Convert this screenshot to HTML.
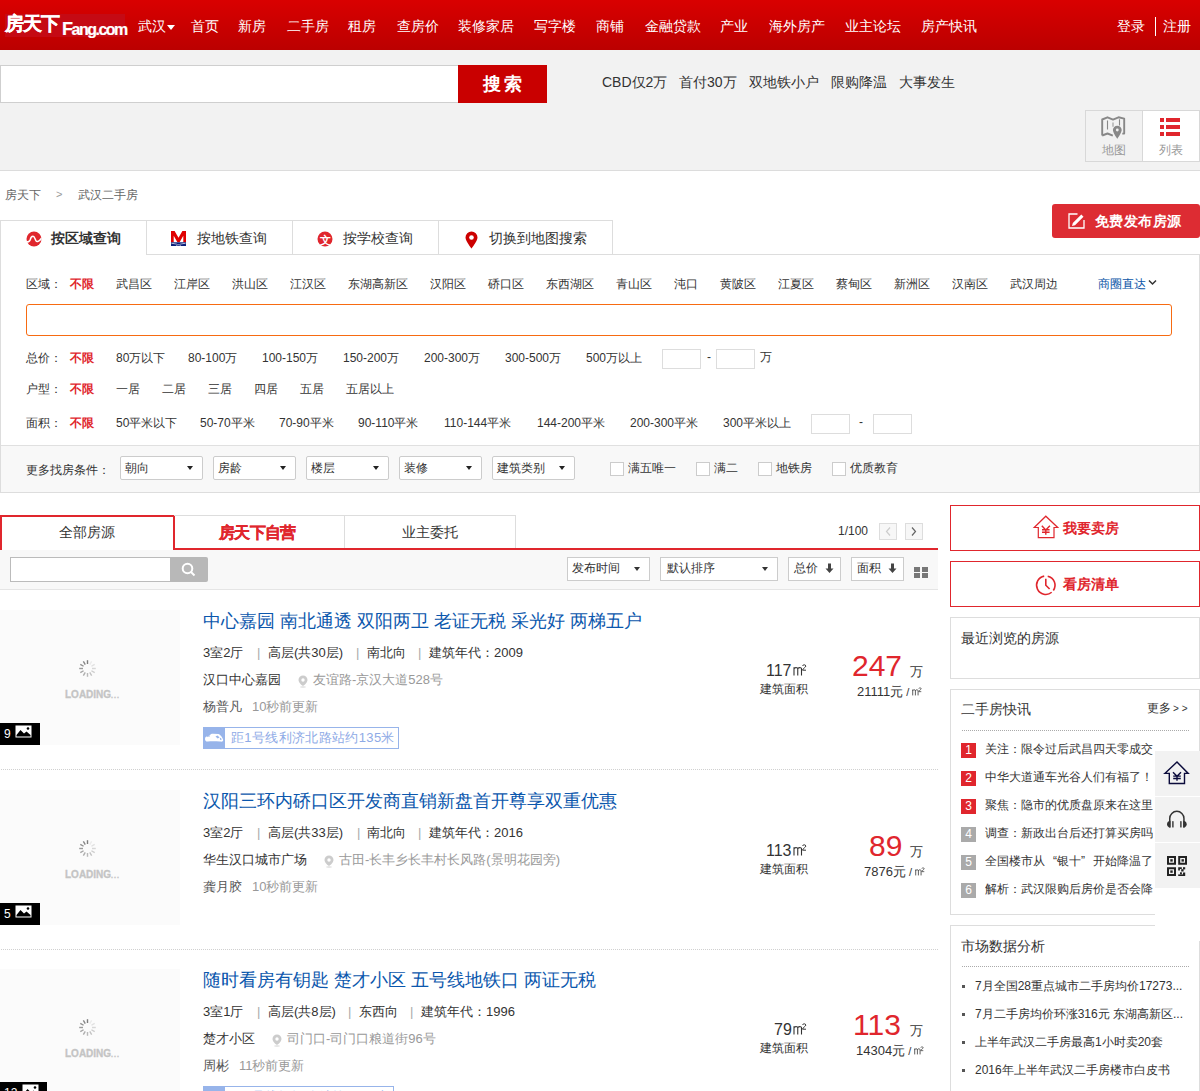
<!DOCTYPE html>
<html><head><meta charset="utf-8"><title>武汉二手房</title><style>
*{margin:0;padding:0;box-sizing:border-box}
html,body{width:1200px;height:1091px;overflow:hidden;background:#fff}
body{font-family:"Liberation Sans",sans-serif;font-size:14px;color:#333;position:relative}
.a{position:absolute;white-space:nowrap}
svg{position:absolute;display:block}
</style></head><body>
<div class="a" style="left:0px;top:0px;width:1200px;height:50px;background:linear-gradient(#d90000,#bb0000)"></div>
<div class="a" style="left:5px;top:14px;width:120px;height:23px;background:#c50a14"></div>
<div class="a" style="left:5px;top:13px;font-size:19px;line-height:23px;color:#fff;font-weight:bold;letter-spacing:-1px;line-height:22px;-webkit-text-stroke:0.3px #fff">房天下</div>
<div class="a" style="left:62px;top:19px;font-size:16px;line-height:20px;color:#fff;font-weight:bold;letter-spacing:-1.5px;line-height:20px;-webkit-text-stroke:0.2px #fff"><span style="font-size:18px">F</span>ang.com</div>
<div class="a" style="left:138px;top:16px;font-size:14px;line-height:18px;color:#fff;line-height:20px">武汉</div>
<div class="a" style="left:191px;top:16px;font-size:14px;line-height:18px;color:#fff;line-height:20px">首页</div>
<div class="a" style="left:238px;top:16px;font-size:14px;line-height:18px;color:#fff;line-height:20px">新房</div>
<div class="a" style="left:287px;top:16px;font-size:14px;line-height:18px;color:#fff;line-height:20px">二手房</div>
<div class="a" style="left:348px;top:16px;font-size:14px;line-height:18px;color:#fff;line-height:20px">租房</div>
<div class="a" style="left:397px;top:16px;font-size:14px;line-height:18px;color:#fff;line-height:20px">查房价</div>
<div class="a" style="left:458px;top:16px;font-size:14px;line-height:18px;color:#fff;line-height:20px">装修家居</div>
<div class="a" style="left:534px;top:16px;font-size:14px;line-height:18px;color:#fff;line-height:20px">写字楼</div>
<div class="a" style="left:596px;top:16px;font-size:14px;line-height:18px;color:#fff;line-height:20px">商铺</div>
<div class="a" style="left:645px;top:16px;font-size:14px;line-height:18px;color:#fff;line-height:20px">金融贷款</div>
<div class="a" style="left:720px;top:16px;font-size:14px;line-height:18px;color:#fff;line-height:20px">产业</div>
<div class="a" style="left:769px;top:16px;font-size:14px;line-height:18px;color:#fff;line-height:20px">海外房产</div>
<div class="a" style="left:845px;top:16px;font-size:14px;line-height:18px;color:#fff;line-height:20px">业主论坛</div>
<div class="a" style="left:921px;top:16px;font-size:14px;line-height:18px;color:#fff;line-height:20px">房产快讯</div>
<div class="a" style="left:1117px;top:16px;font-size:14px;line-height:18px;color:#fff;line-height:20px">登录</div>
<div class="a" style="left:1163px;top:16px;font-size:14px;line-height:18px;color:#fff;line-height:20px">注册</div>
<div class="a" style="left:167px;top:25px;width:0;height:0;border-left:4px solid transparent;border-right:4px solid transparent;border-top:5px solid #fff"></div>
<div class="a" style="left:1155px;top:17px;width:1px;height:19px;background:#fff"></div>
<div class="a" style="left:0px;top:50px;width:1200px;height:121px;background:#f2f2f2;border-bottom:1px solid #dcdcdc"></div>
<div class="a" style="left:0px;top:65px;width:459px;height:38px;background:#fff;border:1px solid #cfcfcf"></div>
<div class="a" style="left:458px;top:65px;width:89px;height:38px;background:#c90000;color:#fff;font-weight:bold;font-size:18px;line-height:38px;text-align:center;letter-spacing:3px;text-indent:3px">搜索</div>
<div class="a" style="left:602px;top:73px;font-size:14px;line-height:18px;color:#333;">CBD仅2万</div>
<div class="a" style="left:679px;top:73px;font-size:14px;line-height:18px;color:#333;">首付30万</div>
<div class="a" style="left:749px;top:73px;font-size:14px;line-height:18px;color:#333;">双地铁小户</div>
<div class="a" style="left:831px;top:73px;font-size:14px;line-height:18px;color:#333;">限购降温</div>
<div class="a" style="left:899px;top:73px;font-size:14px;line-height:18px;color:#333;">大事发生</div>
<div class="a" style="left:1085px;top:110px;width:115px;height:52px;border:1px solid #d8d8d8;background:#f2f2f2"></div>
<div class="a" style="left:1142px;top:111px;width:57px;height:50px;background:#fff;border-left:1px solid #d8d8d8"></div>
<svg style="left:1100px;top:115px" width="26" height="26" viewBox="0 0 26 26">
<path d="M2.2 20.5 V4.5 L7.5 2.3 L13 4.6 L18.5 2.3 L24.2 3.6 V18.6 H22.3" fill="none" stroke="#888" stroke-width="1.9" stroke-linejoin="round"/>
<path d="M2.2 20.5 L7.5 18.5 L12.8 20.6" fill="none" stroke="#888" stroke-width="1.9" stroke-linejoin="round"/>
<path d="M7.5 5.5 V14.5 M19.5 4.3 V10.5" stroke="#888" stroke-width="1.1"/>
<path d="M13 7.5 V11.8" stroke="#999" stroke-width="1.1"/>
<path d="M17.3 10.7 a4.4 4.4 0 0 1 4.4 4.4 c0 2.5 -4.4 8.9 -4.4 8.9 c0 0 -4.4 -6.4 -4.4 -8.9 a4.4 4.4 0 0 1 4.4 -4.4z" fill="#888"/>
<circle cx="17.3" cy="15" r="1.4" fill="#f2f2f2"/>
</svg>
<div class="a" style="left:1102px;top:142px;font-size:12px;line-height:16px;color:#999;">地图</div>
<div class="a" style="left:1160px;top:118px;width:4px;height:3.5px;background:#e0262d"></div>
<div class="a" style="left:1166px;top:118px;width:14px;height:3.5px;background:#e0262d"></div>
<div class="a" style="left:1160px;top:125px;width:4px;height:3.5px;background:#e0262d"></div>
<div class="a" style="left:1166px;top:125px;width:14px;height:3.5px;background:#e0262d"></div>
<div class="a" style="left:1160px;top:132px;width:4px;height:3.5px;background:#e0262d"></div>
<div class="a" style="left:1166px;top:132px;width:14px;height:3.5px;background:#e0262d"></div>
<div class="a" style="left:1159px;top:142px;font-size:12px;line-height:16px;color:#999;">列表</div>
<div class="a" style="left:5px;top:187px;font-size:12px;line-height:16px;color:#666;">房天下</div>
<div class="a" style="left:56px;top:187px;font-size:11px;line-height:15px;color:#999;">&gt;</div>
<div class="a" style="left:78px;top:187px;font-size:12px;line-height:16px;color:#666;">武汉二手房</div>
<div class="a" style="left:1052px;top:204px;width:148px;height:34px;background:#dd2c33;border-radius:3px"></div>
<svg style="left:1068px;top:213px" width="18" height="17" viewBox="0 0 18 17"><path d="M9.5 1 H1 V15 H16 V7" fill="none" stroke="#fff" stroke-width="1.3"/><path d="M4 13 L4.8 10 L13.3 1.5 L15.5 3.7 L7 12.2 Z" fill="#fff"/></svg>
<div class="a" style="left:1095px;top:212px;font-size:14px;line-height:18px;color:#fff;font-weight:bold;letter-spacing:0.4px">免费发布房源</div>
<div class="a" style="left:0px;top:220px;width:613px;height:35px;border:1px solid #ddd;border-bottom:none"></div>
<div class="a" style="left:147px;top:254px;width:1053px;height:1px;background:#ddd"></div>
<div class="a" style="left:146px;top:220px;width:1px;height:35px;background:#ddd"></div>
<div class="a" style="left:292px;top:220px;width:1px;height:35px;background:#ddd"></div>
<div class="a" style="left:438px;top:220px;width:1px;height:35px;background:#ddd"></div>
<svg style="left:26px;top:231px" width="16" height="16" viewBox="0 0 16 16">
<circle cx="8" cy="8" r="7.5" fill="#e0262d"/>
<path d="M0.5 11 C2.5 11 3.8 10.5 4.3 8.5 C4.8 6 5.8 5.2 7 5.2 C8.5 5.2 9 8 9.8 9.5 C10.5 11 12.5 11.5 15.5 7.3" fill="none" stroke="#fff" stroke-width="1.5"/>
</svg>
<div class="a" style="left:51px;top:229px;font-size:14px;line-height:18px;color:#333;font-weight:bold;">按区域查询</div>
<svg style="left:171px;top:231px" width="16" height="16" viewBox="0 0 16 16"><path d="M0 11.3 V0 H3.6 L7.5 6.8 L11.4 0 H15 V11.3 H12.3 V4.8 L8.6 11.3 H6.4 L2.7 4.8 V11.3 Z" fill="#e00000"/><rect x="0" y="11.3" width="15" height="3.7" fill="#0a1f7a"/><path d="M0.5 12.6 C2.5 12 4 13.3 5.5 12.8 M9.5 12.8 C11 13.3 12.5 12 14.5 12.6 M5 14.3 C6.5 13.6 8.5 13.6 10 14.3" fill="none" stroke="#fff" stroke-width="0.7"/></svg>
<div class="a" style="left:197px;top:229px;font-size:14px;line-height:18px;color:#333;">按地铁查询</div>
<svg style="left:317px;top:231px" width="16" height="16" viewBox="0 0 16 16">
<circle cx="8" cy="8" r="7.5" fill="#e0262d"/>
<text x="8" y="12.5" font-size="11" text-anchor="middle" fill="#fff" font-weight="bold">文</text>
</svg>
<div class="a" style="left:343px;top:229px;font-size:14px;line-height:18px;color:#333;">按学校查询</div>
<svg style="left:465px;top:231px" width="13" height="18" viewBox="0 0 13 18">
<path d="M6.5 0.5 A6 6 0 0 1 12.5 6.5 C12.5 10 6.5 17.5 6.5 17.5 C6.5 17.5 0.5 10 0.5 6.5 A6 6 0 0 1 6.5 0.5Z" fill="#c00"/>
<circle cx="6.5" cy="6.5" r="2.3" fill="#fff"/>
</svg>
<div class="a" style="left:489px;top:229px;font-size:14px;line-height:18px;color:#333;">切换到地图搜索</div>
<div class="a" style="left:0px;top:254px;width:1200px;height:239px;border:1px solid #ddd;border-top:none"></div>
<div class="a" style="left:1px;top:445px;width:1198px;height:47px;background:#f8f8f8;border-top:1px solid #e0e0e0"></div>
<div class="a" style="left:26px;top:276px;font-size:12px;line-height:16px;color:#333;">区域：</div>
<div class="a" style="left:70px;top:276px;font-size:12px;line-height:16px;color:#e0262d;font-weight:bold;">不限</div>
<div class="a" style="left:116px;top:276px;font-size:12px;line-height:16px;color:#333;">武昌区</div>
<div class="a" style="left:174px;top:276px;font-size:12px;line-height:16px;color:#333;">江岸区</div>
<div class="a" style="left:232px;top:276px;font-size:12px;line-height:16px;color:#333;">洪山区</div>
<div class="a" style="left:290px;top:276px;font-size:12px;line-height:16px;color:#333;">江汉区</div>
<div class="a" style="left:348px;top:276px;font-size:12px;line-height:16px;color:#333;">东湖高新区</div>
<div class="a" style="left:430px;top:276px;font-size:12px;line-height:16px;color:#333;">汉阳区</div>
<div class="a" style="left:488px;top:276px;font-size:12px;line-height:16px;color:#333;">硚口区</div>
<div class="a" style="left:546px;top:276px;font-size:12px;line-height:16px;color:#333;">东西湖区</div>
<div class="a" style="left:616px;top:276px;font-size:12px;line-height:16px;color:#333;">青山区</div>
<div class="a" style="left:674px;top:276px;font-size:12px;line-height:16px;color:#333;">沌口</div>
<div class="a" style="left:720px;top:276px;font-size:12px;line-height:16px;color:#333;">黄陂区</div>
<div class="a" style="left:778px;top:276px;font-size:12px;line-height:16px;color:#333;">江夏区</div>
<div class="a" style="left:836px;top:276px;font-size:12px;line-height:16px;color:#333;">蔡甸区</div>
<div class="a" style="left:894px;top:276px;font-size:12px;line-height:16px;color:#333;">新洲区</div>
<div class="a" style="left:952px;top:276px;font-size:12px;line-height:16px;color:#333;">汉南区</div>
<div class="a" style="left:1010px;top:276px;font-size:12px;line-height:16px;color:#333;">武汉周边</div>
<div class="a" style="left:1098px;top:276px;font-size:12px;line-height:16px;color:#0b56a8;">商圈直达</div>
<svg style="left:1148px;top:279px" width="9" height="7" viewBox="0 0 9 7"><path d="M1 1.5 L4.5 5 L8 1.5" fill="none" stroke="#333" stroke-width="1.5"/></svg>
<div class="a" style="left:26px;top:304px;width:1146px;height:32px;border:1px solid #f76b12;border-radius:3px"></div>
<div class="a" style="left:26px;top:350px;font-size:12px;line-height:16px;color:#333;">总价：</div>
<div class="a" style="left:70px;top:350px;font-size:12px;line-height:16px;color:#e0262d;font-weight:bold;">不限</div>
<div class="a" style="left:116px;top:350px;font-size:12px;line-height:16px;color:#333;">80万以下</div>
<div class="a" style="left:188px;top:350px;font-size:12px;line-height:16px;color:#333;">80-100万</div>
<div class="a" style="left:262px;top:350px;font-size:12px;line-height:16px;color:#333;">100-150万</div>
<div class="a" style="left:343px;top:350px;font-size:12px;line-height:16px;color:#333;">150-200万</div>
<div class="a" style="left:424px;top:350px;font-size:12px;line-height:16px;color:#333;">200-300万</div>
<div class="a" style="left:505px;top:350px;font-size:12px;line-height:16px;color:#333;">300-500万</div>
<div class="a" style="left:586px;top:350px;font-size:12px;line-height:16px;color:#333;">500万以上</div>
<div class="a" style="left:662px;top:349px;width:39px;height:20px;border:1px solid #ddd;background:#fff"></div>
<div class="a" style="left:707px;top:349px;font-size:12px;line-height:16px;color:#333;">-</div>
<div class="a" style="left:716px;top:349px;width:39px;height:20px;border:1px solid #ddd;background:#fff"></div>
<div class="a" style="left:760px;top:349px;font-size:12px;line-height:16px;color:#333;">万</div>
<div class="a" style="left:26px;top:381px;font-size:12px;line-height:16px;color:#333;">户型：</div>
<div class="a" style="left:70px;top:381px;font-size:12px;line-height:16px;color:#e0262d;font-weight:bold;">不限</div>
<div class="a" style="left:116px;top:381px;font-size:12px;line-height:16px;color:#333;">一居</div>
<div class="a" style="left:162px;top:381px;font-size:12px;line-height:16px;color:#333;">二居</div>
<div class="a" style="left:208px;top:381px;font-size:12px;line-height:16px;color:#333;">三居</div>
<div class="a" style="left:254px;top:381px;font-size:12px;line-height:16px;color:#333;">四居</div>
<div class="a" style="left:300px;top:381px;font-size:12px;line-height:16px;color:#333;">五居</div>
<div class="a" style="left:346px;top:381px;font-size:12px;line-height:16px;color:#333;">五居以上</div>
<div class="a" style="left:26px;top:415px;font-size:12px;line-height:16px;color:#333;">面积：</div>
<div class="a" style="left:70px;top:415px;font-size:12px;line-height:16px;color:#e0262d;font-weight:bold;">不限</div>
<div class="a" style="left:116px;top:415px;font-size:12px;line-height:16px;color:#333;">50平米以下</div>
<div class="a" style="left:200px;top:415px;font-size:12px;line-height:16px;color:#333;">50-70平米</div>
<div class="a" style="left:279px;top:415px;font-size:12px;line-height:16px;color:#333;">70-90平米</div>
<div class="a" style="left:358px;top:415px;font-size:12px;line-height:16px;color:#333;">90-110平米</div>
<div class="a" style="left:444px;top:415px;font-size:12px;line-height:16px;color:#333;">110-144平米</div>
<div class="a" style="left:537px;top:415px;font-size:12px;line-height:16px;color:#333;">144-200平米</div>
<div class="a" style="left:630px;top:415px;font-size:12px;line-height:16px;color:#333;">200-300平米</div>
<div class="a" style="left:723px;top:415px;font-size:12px;line-height:16px;color:#333;">300平米以上</div>
<div class="a" style="left:811px;top:414px;width:39px;height:20px;border:1px solid #ddd;background:#fff"></div>
<div class="a" style="left:859px;top:414px;font-size:12px;line-height:16px;color:#333;">-</div>
<div class="a" style="left:873px;top:414px;width:39px;height:20px;border:1px solid #ddd;background:#fff"></div>
<div class="a" style="left:26px;top:462px;font-size:12px;line-height:16px;color:#333;">更多找房条件：</div>
<div class="a" style="left:120px;top:456px;width:83px;height:24px;border:1px solid #ccc;background:#fff;border-radius:2px"></div>
<div class="a" style="left:125px;top:460px;font-size:12px;line-height:16px;color:#333;">朝向</div>
<div class="a" style="left:186.5px;top:466px;width:0;height:0;border-left:3.5px solid transparent;border-right:3.5px solid transparent;border-top:4.5px solid #222"></div>
<div class="a" style="left:213px;top:456px;width:83px;height:24px;border:1px solid #ccc;background:#fff;border-radius:2px"></div>
<div class="a" style="left:218px;top:460px;font-size:12px;line-height:16px;color:#333;">房龄</div>
<div class="a" style="left:279.5px;top:466px;width:0;height:0;border-left:3.5px solid transparent;border-right:3.5px solid transparent;border-top:4.5px solid #222"></div>
<div class="a" style="left:306px;top:456px;width:83px;height:24px;border:1px solid #ccc;background:#fff;border-radius:2px"></div>
<div class="a" style="left:311px;top:460px;font-size:12px;line-height:16px;color:#333;">楼层</div>
<div class="a" style="left:372.5px;top:466px;width:0;height:0;border-left:3.5px solid transparent;border-right:3.5px solid transparent;border-top:4.5px solid #222"></div>
<div class="a" style="left:399px;top:456px;width:83px;height:24px;border:1px solid #ccc;background:#fff;border-radius:2px"></div>
<div class="a" style="left:404px;top:460px;font-size:12px;line-height:16px;color:#333;">装修</div>
<div class="a" style="left:465.5px;top:466px;width:0;height:0;border-left:3.5px solid transparent;border-right:3.5px solid transparent;border-top:4.5px solid #222"></div>
<div class="a" style="left:492px;top:456px;width:83px;height:24px;border:1px solid #ccc;background:#fff;border-radius:2px"></div>
<div class="a" style="left:497px;top:460px;font-size:12px;line-height:16px;color:#333;">建筑类别</div>
<div class="a" style="left:558.5px;top:466px;width:0;height:0;border-left:3.5px solid transparent;border-right:3.5px solid transparent;border-top:4.5px solid #222"></div>
<div class="a" style="left:610px;top:462px;width:14px;height:14px;border:1px solid #ccc;background:#fff"></div>
<div class="a" style="left:628px;top:460px;font-size:12px;line-height:16px;color:#333;">满五唯一</div>
<div class="a" style="left:696px;top:462px;width:14px;height:14px;border:1px solid #ccc;background:#fff"></div>
<div class="a" style="left:714px;top:460px;font-size:12px;line-height:16px;color:#333;">满二</div>
<div class="a" style="left:758px;top:462px;width:14px;height:14px;border:1px solid #ccc;background:#fff"></div>
<div class="a" style="left:776px;top:460px;font-size:12px;line-height:16px;color:#333;">地铁房</div>
<div class="a" style="left:832px;top:462px;width:14px;height:14px;border:1px solid #ccc;background:#fff"></div>
<div class="a" style="left:850px;top:460px;font-size:12px;line-height:16px;color:#333;">优质教育</div>
<div class="a" style="left:0px;top:515px;width:175px;height:35px;border:2px solid #e0262d;border-bottom:none;background:#fff"></div>
<div class="a" style="left:174px;top:548px;width:764px;height:2px;background:#e0262d"></div>
<div class="a" style="left:174px;top:515px;width:342px;height:33px;border:1px solid #ddd;border-left:none;border-bottom:none"></div>
<div class="a" style="left:344px;top:515px;width:1px;height:33px;background:#ddd"></div>
<div class="a" style="left:59px;top:523px;font-size:14px;line-height:18px;color:#333;">全部房源</div>
<div class="a" style="left:219px;top:523px;font-size:16px;line-height:20px;color:#e0262d;font-weight:bold;letter-spacing:-0.7px;-webkit-text-stroke:0.3px #e0262d">房天下自营</div>
<div class="a" style="left:402px;top:523px;font-size:14px;line-height:18px;color:#333;">业主委托</div>
<div class="a" style="left:838px;top:523px;font-size:12px;line-height:16px;color:#333;">1/100</div>
<div class="a" style="left:879px;top:523px;width:18px;height:17px;border:1px solid #ddd;background:#f7f7f7"></div>
<div class="a" style="left:905px;top:523px;width:18px;height:17px;border:1px solid #ddd;background:#f7f7f7"></div>
<svg style="left:879px;top:523px" width="44" height="17" viewBox="0 0 44 17"><path d="M11 4.5 L7.5 8.5 L11 12.5" fill="none" stroke="#ccc" stroke-width="1.2"/><path d="M33 4.5 L36.5 8.5 L33 12.5" fill="none" stroke="#666" stroke-width="1.2"/></svg>
<div class="a" style="left:0px;top:550px;width:938px;height:40px;background:#f8f8f8;border-bottom:1px solid #e5e5e5"></div>
<div class="a" style="left:10px;top:557px;width:161px;height:25px;border:1px solid #bbb;background:#fff"></div>
<div class="a" style="left:170px;top:557px;width:38px;height:25px;background:#b8b8b8;border-radius:0 2px 2px 0"></div>
<svg style="left:181px;top:562px" width="15" height="15" viewBox="0 0 15 15"><circle cx="6.5" cy="6.5" r="4.8" fill="none" stroke="#fff" stroke-width="2"/><path d="M10 10 L13.5 13.5" stroke="#fff" stroke-width="2"/></svg>
<div class="a" style="left:567px;top:557px;width:83px;height:24px;border:1px solid #ccc;background:#fff"></div>
<div class="a" style="left:572px;top:560px;font-size:12px;line-height:16px;color:#333;">发布时间</div>
<div class="a" style="left:634px;top:567px;width:0;height:0;border-left:3.5px solid transparent;border-right:3.5px solid transparent;border-top:4px solid #333"></div>
<div class="a" style="left:660px;top:557px;width:118px;height:24px;border:1px solid #ccc;background:#fff"></div>
<div class="a" style="left:667px;top:560px;font-size:12px;line-height:16px;color:#333;">默认排序</div>
<div class="a" style="left:762px;top:567px;width:0;height:0;border-left:3.5px solid transparent;border-right:3.5px solid transparent;border-top:4px solid #333"></div>
<div class="a" style="left:788px;top:557px;width:53px;height:24px;border:1px solid #ccc;background:#fff"></div>
<div class="a" style="left:794px;top:560px;font-size:12px;line-height:16px;color:#333;">总价</div>
<svg style="left:825px;top:563px" width="9" height="11" viewBox="0 0 9 11"><path d="M3 0.5 H6 V5.5 H8.5 L4.5 10 L0.5 5.5 H3Z" fill="#444"/></svg>
<div class="a" style="left:851px;top:557px;width:53px;height:24px;border:1px solid #ccc;background:#fff"></div>
<div class="a" style="left:857px;top:560px;font-size:12px;line-height:16px;color:#333;">面积</div>
<svg style="left:888px;top:563px" width="9" height="11" viewBox="0 0 9 11"><path d="M3 0.5 H6 V5.5 H8.5 L4.5 10 L0.5 5.5 H3Z" fill="#444"/></svg>
<div class="a" style="left:914px;top:567px;width:6px;height:5px;background:#777"></div>
<div class="a" style="left:922px;top:567px;width:6px;height:5px;background:#777"></div>
<div class="a" style="left:914px;top:573px;width:6px;height:5px;background:#777"></div>
<div class="a" style="left:922px;top:573px;width:6px;height:5px;background:#777"></div>
<div class="a" style="left:0px;top:610px;width:180px;height:135px;background:#fbfbfb"></div>
<svg style="left:78px;top:659px" width="19" height="19" viewBox="0 0 19 19"><line x1="9.5" y1="1.2" x2="9.5" y2="5" stroke="rgb(125,125,125)" stroke-width="1.4" transform="rotate(0 9.5 9.5)"/><line x1="9.5" y1="1.2" x2="9.5" y2="5" stroke="rgb(135,135,135)" stroke-width="1.4" transform="rotate(-30 9.5 9.5)"/><line x1="9.5" y1="1.2" x2="9.5" y2="5" stroke="rgb(145,145,145)" stroke-width="1.4" transform="rotate(-60 9.5 9.5)"/><line x1="9.5" y1="1.2" x2="9.5" y2="5" stroke="rgb(155,155,155)" stroke-width="1.4" transform="rotate(-90 9.5 9.5)"/><line x1="9.5" y1="1.2" x2="9.5" y2="5" stroke="rgb(165,165,165)" stroke-width="1.4" transform="rotate(-120 9.5 9.5)"/><line x1="9.5" y1="1.2" x2="9.5" y2="5" stroke="rgb(175,175,175)" stroke-width="1.4" transform="rotate(-150 9.5 9.5)"/><line x1="9.5" y1="1.2" x2="9.5" y2="5" stroke="rgb(185,185,185)" stroke-width="1.4" transform="rotate(-180 9.5 9.5)"/><line x1="9.5" y1="1.2" x2="9.5" y2="5" stroke="rgb(195,195,195)" stroke-width="1.4" transform="rotate(-210 9.5 9.5)"/><line x1="9.5" y1="1.2" x2="9.5" y2="5" stroke="rgb(205,205,205)" stroke-width="1.4" transform="rotate(-240 9.5 9.5)"/><line x1="9.5" y1="1.2" x2="9.5" y2="5" stroke="rgb(215,215,215)" stroke-width="1.4" transform="rotate(-270 9.5 9.5)"/><line x1="9.5" y1="1.2" x2="9.5" y2="5" stroke="rgb(225,225,225)" stroke-width="1.4" transform="rotate(-300 9.5 9.5)"/><line x1="9.5" y1="1.2" x2="9.5" y2="5" stroke="rgb(235,235,235)" stroke-width="1.4" transform="rotate(-330 9.5 9.5)"/></svg>
<div class="a" style="left:65px;top:689px;font-size:10px;line-height:14px;color:#c4c4c4;font-weight:bold;line-height:12px;-webkit-text-stroke:0.3px #c4c4c4">LOADING<span style="font-size:7px;letter-spacing:1px">...</span></div>
<div class="a" style="left:0px;top:723px;width:40px;height:22px;background:#000"></div>
<div class="a" style="left:4px;top:726px;font-size:12px;line-height:16px;color:#fff;line-height:16px">9</div>
<svg style="left:15px;top:725px" width="17" height="13" viewBox="0 0 17 13"><rect x="0.5" y="0.5" width="16" height="12" fill="#fff"/><path d="M1.5 10 L5.5 5 L9 8.5 L11.5 6.5 L15.5 10 V11.5 H1.5Z" fill="#000"/><circle cx="13" cy="3.5" r="1.3" fill="#000"/></svg>
<div class="a" style="left:203px;top:609px;font-size:18px;line-height:22px;color:#0b57ad;line-height:24px">中心嘉园 南北通透 双阳两卫 老证无税 采光好 两梯五户</div>
<div class="a" style="left:203px;top:644px;font-size:13px;line-height:17px;color:#333;">3室2厅</div>
<div class="a" style="left:257px;top:644px;font-size:13px;line-height:17px;color:#aaa;">|</div>
<div class="a" style="left:268px;top:644px;font-size:13px;line-height:17px;color:#333;">高层(共30层)</div>
<div class="a" style="left:356px;top:644px;font-size:13px;line-height:17px;color:#aaa;">|</div>
<div class="a" style="left:367px;top:644px;font-size:13px;line-height:17px;color:#333;">南北向</div>
<div class="a" style="left:418px;top:644px;font-size:13px;line-height:17px;color:#aaa;">|</div>
<div class="a" style="left:429px;top:644px;font-size:13px;line-height:17px;color:#333;">建筑年代：2009</div>
<div class="a" style="left:203px;top:671px;font-size:13px;line-height:17px;color:#333;">汉口中心嘉园</div>
<svg style="left:298px;top:675px" width="10" height="13" viewBox="0 0 10 13"><path d="M5 0.5 A4.5 4.5 0 0 1 9.5 5 C9.5 8 5 11 5 11 C5 11 0.5 8 0.5 5 A4.5 4.5 0 0 1 5 0.5Z" fill="#ccc"/><circle cx="5" cy="5" r="1.7" fill="#fff"/><ellipse cx="5" cy="12" rx="3" ry="0.8" fill="#ddd"/></svg>
<div class="a" style="left:313px;top:671px;font-size:13px;line-height:17px;color:#999;">友谊路-京汉大道528号</div>
<div class="a" style="left:203px;top:698px;font-size:13px;line-height:17px;color:#555;">杨普凡</div>
<div class="a" style="left:252px;top:698px;font-size:13px;line-height:17px;color:#999;">10秒前更新</div>
<div class="a" style="left:203px;top:727px;width:196px;height:22px;border:1px solid #97b4ea;background:#fff"></div>
<div class="a" style="left:203px;top:727px;width:22px;height:22px;background:#97b4ea"></div>
<svg style="left:203px;top:727px" width="22" height="22" viewBox="0 0 22 22"><path d="M2 12 C2 10.2 3 9.6 4.5 9.6 L7 8.2 C7.5 7.2 8.5 6.8 10 6.8 L15.5 7 C17 7.3 20 11 20.2 13 C20.2 14.5 19 15 17 14.6 C13 14.2 8 14.1 5 14.5 C3 14.8 2 13.8 2 12 Z" fill="#fff"/><path d="M12.5 9.6 L14.5 8.6 L16.6 10.6 L14.6 11.6 Z M16.8 11.6 L17.8 10.8 L18.8 12.6 L17.3 12.9Z" fill="#97b4ea"/><path d="M4 9.6 L7 9.2" stroke="#97b4ea" stroke-width="0.6"/></svg>
<div class="a" style="left:231px;top:729px;font-size:13px;line-height:17px;color:#8eaae6;letter-spacing:0.35px">距1号线利济北路站约135米</div>
<div class="a" style="left:766px;top:661px;font-size:16px;line-height:20px;color:#333;line-height:20px">117<svg style="position:relative;display:inline-block;vertical-align:0;margin-left:1px" width="14" height="12" viewBox="0 0 14 12"><path d="M1 3.2 V11.5 M1 4.8 C1.3 3.3 4.75 3.1 4.75 4.8 V11.5 M4.75 4.8 C5.05 3.3 8.5 3.1 8.5 4.8 V11.5" fill="none" stroke="#333" stroke-width="1.1"/><path d="M9.6 1.9 C9.8 0.4 12.8 0.4 12.8 2.1 C12.8 3.4 10 4.2 9.5 6.2 H13" fill="none" stroke="#333" stroke-width="1"/></svg></div>
<div class="a" style="left:760px;top:681px;font-size:12px;line-height:16px;color:#333;">建筑面积</div>
<div class="a" style="left:852px;top:649px;font-size:30px;line-height:34px;color:#e0262d;line-height:34px">247</div>
<div class="a" style="left:910px;top:663px;font-size:13px;line-height:17px;color:#333;">万</div>
<div class="a" style="left:857px;top:683px;font-size:13px;line-height:17px;color:#333;">21111元<span style="font-size:11px;margin:0 2px 0 3px">/</span><svg style="position:relative;display:inline-block;vertical-align:0;margin-left:1px" width="10" height="9" viewBox="0 0 14 12"><path d="M1 3.2 V11.5 M1 4.8 C1.3 3.3 4.75 3.1 4.75 4.8 V11.5 M4.75 4.8 C5.05 3.3 8.5 3.1 8.5 4.8 V11.5" fill="none" stroke="#333" stroke-width="1.1"/><path d="M9.6 1.9 C9.8 0.4 12.8 0.4 12.8 2.1 C12.8 3.4 10 4.2 9.5 6.2 H13" fill="none" stroke="#333" stroke-width="1"/></svg></div>
<div class="a" style="left:1px;top:769px;width:937px;height:1px;background:repeating-linear-gradient(90deg,#d0d0d0 0 1px,transparent 1px 2px)"></div>
<div class="a" style="left:0px;top:790px;width:180px;height:135px;background:#fbfbfb"></div>
<svg style="left:78px;top:839px" width="19" height="19" viewBox="0 0 19 19"><line x1="9.5" y1="1.2" x2="9.5" y2="5" stroke="rgb(125,125,125)" stroke-width="1.4" transform="rotate(0 9.5 9.5)"/><line x1="9.5" y1="1.2" x2="9.5" y2="5" stroke="rgb(135,135,135)" stroke-width="1.4" transform="rotate(-30 9.5 9.5)"/><line x1="9.5" y1="1.2" x2="9.5" y2="5" stroke="rgb(145,145,145)" stroke-width="1.4" transform="rotate(-60 9.5 9.5)"/><line x1="9.5" y1="1.2" x2="9.5" y2="5" stroke="rgb(155,155,155)" stroke-width="1.4" transform="rotate(-90 9.5 9.5)"/><line x1="9.5" y1="1.2" x2="9.5" y2="5" stroke="rgb(165,165,165)" stroke-width="1.4" transform="rotate(-120 9.5 9.5)"/><line x1="9.5" y1="1.2" x2="9.5" y2="5" stroke="rgb(175,175,175)" stroke-width="1.4" transform="rotate(-150 9.5 9.5)"/><line x1="9.5" y1="1.2" x2="9.5" y2="5" stroke="rgb(185,185,185)" stroke-width="1.4" transform="rotate(-180 9.5 9.5)"/><line x1="9.5" y1="1.2" x2="9.5" y2="5" stroke="rgb(195,195,195)" stroke-width="1.4" transform="rotate(-210 9.5 9.5)"/><line x1="9.5" y1="1.2" x2="9.5" y2="5" stroke="rgb(205,205,205)" stroke-width="1.4" transform="rotate(-240 9.5 9.5)"/><line x1="9.5" y1="1.2" x2="9.5" y2="5" stroke="rgb(215,215,215)" stroke-width="1.4" transform="rotate(-270 9.5 9.5)"/><line x1="9.5" y1="1.2" x2="9.5" y2="5" stroke="rgb(225,225,225)" stroke-width="1.4" transform="rotate(-300 9.5 9.5)"/><line x1="9.5" y1="1.2" x2="9.5" y2="5" stroke="rgb(235,235,235)" stroke-width="1.4" transform="rotate(-330 9.5 9.5)"/></svg>
<div class="a" style="left:65px;top:869px;font-size:10px;line-height:14px;color:#c4c4c4;font-weight:bold;line-height:12px;-webkit-text-stroke:0.3px #c4c4c4">LOADING<span style="font-size:7px;letter-spacing:1px">...</span></div>
<div class="a" style="left:0px;top:903px;width:40px;height:22px;background:#000"></div>
<div class="a" style="left:4px;top:906px;font-size:12px;line-height:16px;color:#fff;line-height:16px">5</div>
<svg style="left:15px;top:905px" width="17" height="13" viewBox="0 0 17 13"><rect x="0.5" y="0.5" width="16" height="12" fill="#fff"/><path d="M1.5 10 L5.5 5 L9 8.5 L11.5 6.5 L15.5 10 V11.5 H1.5Z" fill="#000"/><circle cx="13" cy="3.5" r="1.3" fill="#000"/></svg>
<div class="a" style="left:203px;top:789px;font-size:18px;line-height:22px;color:#0b57ad;line-height:24px">汉阳三环内硚口区开发商直销新盘首开尊享双重优惠</div>
<div class="a" style="left:203px;top:824px;font-size:13px;line-height:17px;color:#333;">3室2厅</div>
<div class="a" style="left:257px;top:824px;font-size:13px;line-height:17px;color:#aaa;">|</div>
<div class="a" style="left:268px;top:824px;font-size:13px;line-height:17px;color:#333;">高层(共33层)</div>
<div class="a" style="left:357px;top:824px;font-size:13px;line-height:17px;color:#aaa;">|</div>
<div class="a" style="left:367px;top:824px;font-size:13px;line-height:17px;color:#333;">南北向</div>
<div class="a" style="left:418px;top:824px;font-size:13px;line-height:17px;color:#aaa;">|</div>
<div class="a" style="left:429px;top:824px;font-size:13px;line-height:17px;color:#333;">建筑年代：2016</div>
<div class="a" style="left:203px;top:851px;font-size:13px;line-height:17px;color:#333;">华生汉口城市广场</div>
<svg style="left:324px;top:855px" width="10" height="13" viewBox="0 0 10 13"><path d="M5 0.5 A4.5 4.5 0 0 1 9.5 5 C9.5 8 5 11 5 11 C5 11 0.5 8 0.5 5 A4.5 4.5 0 0 1 5 0.5Z" fill="#ccc"/><circle cx="5" cy="5" r="1.7" fill="#fff"/><ellipse cx="5" cy="12" rx="3" ry="0.8" fill="#ddd"/></svg>
<div class="a" style="left:339px;top:851px;font-size:13px;line-height:17px;color:#999;">古田-长丰乡长丰村长风路(景明花园旁)</div>
<div class="a" style="left:203px;top:878px;font-size:13px;line-height:17px;color:#555;">龚月胶</div>
<div class="a" style="left:252px;top:878px;font-size:13px;line-height:17px;color:#999;">10秒前更新</div>
<div class="a" style="left:766px;top:841px;font-size:16px;line-height:20px;color:#333;line-height:20px">113<svg style="position:relative;display:inline-block;vertical-align:0;margin-left:1px" width="14" height="12" viewBox="0 0 14 12"><path d="M1 3.2 V11.5 M1 4.8 C1.3 3.3 4.75 3.1 4.75 4.8 V11.5 M4.75 4.8 C5.05 3.3 8.5 3.1 8.5 4.8 V11.5" fill="none" stroke="#333" stroke-width="1.1"/><path d="M9.6 1.9 C9.8 0.4 12.8 0.4 12.8 2.1 C12.8 3.4 10 4.2 9.5 6.2 H13" fill="none" stroke="#333" stroke-width="1"/></svg></div>
<div class="a" style="left:760px;top:861px;font-size:12px;line-height:16px;color:#333;">建筑面积</div>
<div class="a" style="left:869px;top:829px;font-size:30px;line-height:34px;color:#e0262d;line-height:34px">89</div>
<div class="a" style="left:910px;top:843px;font-size:13px;line-height:17px;color:#333;">万</div>
<div class="a" style="left:864px;top:863px;font-size:13px;line-height:17px;color:#333;">7876元<span style="font-size:11px;margin:0 2px 0 3px">/</span><svg style="position:relative;display:inline-block;vertical-align:0;margin-left:1px" width="10" height="9" viewBox="0 0 14 12"><path d="M1 3.2 V11.5 M1 4.8 C1.3 3.3 4.75 3.1 4.75 4.8 V11.5 M4.75 4.8 C5.05 3.3 8.5 3.1 8.5 4.8 V11.5" fill="none" stroke="#333" stroke-width="1.1"/><path d="M9.6 1.9 C9.8 0.4 12.8 0.4 12.8 2.1 C12.8 3.4 10 4.2 9.5 6.2 H13" fill="none" stroke="#333" stroke-width="1"/></svg></div>
<div class="a" style="left:1px;top:949px;width:937px;height:1px;background:repeating-linear-gradient(90deg,#d0d0d0 0 1px,transparent 1px 2px)"></div>
<div class="a" style="left:0px;top:969px;width:180px;height:135px;background:#fbfbfb"></div>
<svg style="left:78px;top:1018px" width="19" height="19" viewBox="0 0 19 19"><line x1="9.5" y1="1.2" x2="9.5" y2="5" stroke="rgb(125,125,125)" stroke-width="1.4" transform="rotate(0 9.5 9.5)"/><line x1="9.5" y1="1.2" x2="9.5" y2="5" stroke="rgb(135,135,135)" stroke-width="1.4" transform="rotate(-30 9.5 9.5)"/><line x1="9.5" y1="1.2" x2="9.5" y2="5" stroke="rgb(145,145,145)" stroke-width="1.4" transform="rotate(-60 9.5 9.5)"/><line x1="9.5" y1="1.2" x2="9.5" y2="5" stroke="rgb(155,155,155)" stroke-width="1.4" transform="rotate(-90 9.5 9.5)"/><line x1="9.5" y1="1.2" x2="9.5" y2="5" stroke="rgb(165,165,165)" stroke-width="1.4" transform="rotate(-120 9.5 9.5)"/><line x1="9.5" y1="1.2" x2="9.5" y2="5" stroke="rgb(175,175,175)" stroke-width="1.4" transform="rotate(-150 9.5 9.5)"/><line x1="9.5" y1="1.2" x2="9.5" y2="5" stroke="rgb(185,185,185)" stroke-width="1.4" transform="rotate(-180 9.5 9.5)"/><line x1="9.5" y1="1.2" x2="9.5" y2="5" stroke="rgb(195,195,195)" stroke-width="1.4" transform="rotate(-210 9.5 9.5)"/><line x1="9.5" y1="1.2" x2="9.5" y2="5" stroke="rgb(205,205,205)" stroke-width="1.4" transform="rotate(-240 9.5 9.5)"/><line x1="9.5" y1="1.2" x2="9.5" y2="5" stroke="rgb(215,215,215)" stroke-width="1.4" transform="rotate(-270 9.5 9.5)"/><line x1="9.5" y1="1.2" x2="9.5" y2="5" stroke="rgb(225,225,225)" stroke-width="1.4" transform="rotate(-300 9.5 9.5)"/><line x1="9.5" y1="1.2" x2="9.5" y2="5" stroke="rgb(235,235,235)" stroke-width="1.4" transform="rotate(-330 9.5 9.5)"/></svg>
<div class="a" style="left:65px;top:1048px;font-size:10px;line-height:14px;color:#c4c4c4;font-weight:bold;line-height:12px;-webkit-text-stroke:0.3px #c4c4c4">LOADING<span style="font-size:7px;letter-spacing:1px">...</span></div>
<div class="a" style="left:0px;top:1082px;width:47px;height:22px;background:#000"></div>
<div class="a" style="left:4px;top:1085px;font-size:12px;line-height:16px;color:#fff;line-height:16px">12</div>
<svg style="left:22px;top:1084px" width="17" height="13" viewBox="0 0 17 13"><rect x="0.5" y="0.5" width="16" height="12" fill="#fff"/><path d="M1.5 10 L5.5 5 L9 8.5 L11.5 6.5 L15.5 10 V11.5 H1.5Z" fill="#000"/><circle cx="13" cy="3.5" r="1.3" fill="#000"/></svg>
<div class="a" style="left:203px;top:968px;font-size:18px;line-height:22px;color:#0b57ad;line-height:24px">随时看房有钥匙 楚才小区 五号线地铁口 两证无税</div>
<div class="a" style="left:203px;top:1003px;font-size:13px;line-height:17px;color:#333;">3室1厅</div>
<div class="a" style="left:257px;top:1003px;font-size:13px;line-height:17px;color:#aaa;">|</div>
<div class="a" style="left:268px;top:1003px;font-size:13px;line-height:17px;color:#333;">高层(共8层)</div>
<div class="a" style="left:348px;top:1003px;font-size:13px;line-height:17px;color:#aaa;">|</div>
<div class="a" style="left:359px;top:1003px;font-size:13px;line-height:17px;color:#333;">东西向</div>
<div class="a" style="left:410px;top:1003px;font-size:13px;line-height:17px;color:#aaa;">|</div>
<div class="a" style="left:421px;top:1003px;font-size:13px;line-height:17px;color:#333;">建筑年代：1996</div>
<div class="a" style="left:203px;top:1030px;font-size:13px;line-height:17px;color:#333;">楚才小区</div>
<svg style="left:272px;top:1034px" width="10" height="13" viewBox="0 0 10 13"><path d="M5 0.5 A4.5 4.5 0 0 1 9.5 5 C9.5 8 5 11 5 11 C5 11 0.5 8 0.5 5 A4.5 4.5 0 0 1 5 0.5Z" fill="#ccc"/><circle cx="5" cy="5" r="1.7" fill="#fff"/><ellipse cx="5" cy="12" rx="3" ry="0.8" fill="#ddd"/></svg>
<div class="a" style="left:287px;top:1030px;font-size:13px;line-height:17px;color:#999;">司门口-司门口粮道街96号</div>
<div class="a" style="left:203px;top:1057px;font-size:13px;line-height:17px;color:#555;">周彬</div>
<div class="a" style="left:239px;top:1057px;font-size:13px;line-height:17px;color:#999;">11秒前更新</div>
<div class="a" style="left:203px;top:1086px;width:191px;height:22px;border:1px solid #97b4ea;background:#fff"></div>
<div class="a" style="left:203px;top:1086px;width:22px;height:22px;background:#97b4ea"></div>
<svg style="left:203px;top:1086px" width="22" height="22" viewBox="0 0 22 22"><path d="M2 12 C2 10.2 3 9.6 4.5 9.6 L7 8.2 C7.5 7.2 8.5 6.8 10 6.8 L15.5 7 C17 7.3 20 11 20.2 13 C20.2 14.5 19 15 17 14.6 C13 14.2 8 14.1 5 14.5 C3 14.8 2 13.8 2 12 Z" fill="#fff"/><path d="M12.5 9.6 L14.5 8.6 L16.6 10.6 L14.6 11.6 Z M16.8 11.6 L17.8 10.8 L18.8 12.6 L17.3 12.9Z" fill="#97b4ea"/><path d="M4 9.6 L7 9.2" stroke="#97b4ea" stroke-width="0.6"/></svg>
<div class="a" style="left:231px;top:1088px;font-size:13px;line-height:17px;color:#8eaae6;letter-spacing:0.35px">距2号线江汉路站约1200米</div>
<div class="a" style="left:774px;top:1020px;font-size:16px;line-height:20px;color:#333;line-height:20px">79<svg style="position:relative;display:inline-block;vertical-align:0;margin-left:1px" width="14" height="12" viewBox="0 0 14 12"><path d="M1 3.2 V11.5 M1 4.8 C1.3 3.3 4.75 3.1 4.75 4.8 V11.5 M4.75 4.8 C5.05 3.3 8.5 3.1 8.5 4.8 V11.5" fill="none" stroke="#333" stroke-width="1.1"/><path d="M9.6 1.9 C9.8 0.4 12.8 0.4 12.8 2.1 C12.8 3.4 10 4.2 9.5 6.2 H13" fill="none" stroke="#333" stroke-width="1"/></svg></div>
<div class="a" style="left:760px;top:1040px;font-size:12px;line-height:16px;color:#333;">建筑面积</div>
<div class="a" style="left:853px;top:1008px;font-size:30px;line-height:34px;color:#e0262d;line-height:34px">113</div>
<div class="a" style="left:910px;top:1022px;font-size:13px;line-height:17px;color:#333;">万</div>
<div class="a" style="left:856px;top:1042px;font-size:13px;line-height:17px;color:#333;">14304元<span style="font-size:11px;margin:0 2px 0 3px">/</span><svg style="position:relative;display:inline-block;vertical-align:0;margin-left:1px" width="10" height="9" viewBox="0 0 14 12"><path d="M1 3.2 V11.5 M1 4.8 C1.3 3.3 4.75 3.1 4.75 4.8 V11.5 M4.75 4.8 C5.05 3.3 8.5 3.1 8.5 4.8 V11.5" fill="none" stroke="#333" stroke-width="1.1"/><path d="M9.6 1.9 C9.8 0.4 12.8 0.4 12.8 2.1 C12.8 3.4 10 4.2 9.5 6.2 H13" fill="none" stroke="#333" stroke-width="1"/></svg></div>
<div class="a" style="left:1px;top:1128px;width:937px;height:1px;background:repeating-linear-gradient(90deg,#d0d0d0 0 1px,transparent 1px 2px)"></div>
<div class="a" style="left:950px;top:505px;width:250px;height:46px;border:1px solid #e0262d"></div>
<svg style="left:1032px;top:514px" width="28" height="28" viewBox="0 0 28 28"><path d="M2.2 13.5 L13.8 2.2 L25.75 13.5 H22 V23.7 H6.3 V13.5 Z" fill="none" stroke="#e0262d" stroke-width="1.2" stroke-linejoin="miter"/><path d="M9.8 11.7 L13.8 16 L17.9 11.7 M13.8 16 V20.8 M10 15.8 H17.6 M10 18.3 H17.6" fill="none" stroke="#e0262d" stroke-width="1.4"/></svg>
<div class="a" style="left:1063px;top:519px;font-size:14px;line-height:18px;color:#e0262d;font-weight:bold;">我要卖房</div>
<div class="a" style="left:950px;top:561px;width:250px;height:46px;border:1px solid #e0262d"></div>
<svg style="left:1034px;top:573px" width="24" height="24" viewBox="0 0 24 24"><path d="M13.71 3.2 A9.2 9.2 0 0 1 19.34 17.48 M17.71 19.25 A9.2 9.2 0 1 1 10.2 3.14" fill="none" stroke="#e0262d" stroke-width="1.6"/><path d="M11.8 5.8 V12.2 L15.6 16" fill="none" stroke="#e0262d" stroke-width="1.6"/></svg>
<div class="a" style="left:1063px;top:575px;font-size:14px;line-height:18px;color:#e0262d;font-weight:bold;">看房清单</div>
<div class="a" style="left:950px;top:617px;width:250px;height:62px;border:1px solid #ddd"></div>
<div class="a" style="left:961px;top:629px;font-size:14px;line-height:18px;color:#333;">最近浏览的房源</div>
<div class="a" style="left:950px;top:689px;width:250px;height:226px;border:1px solid #ddd"></div>
<div class="a" style="left:961px;top:700px;font-size:14px;line-height:18px;color:#333;">二手房快讯</div>
<div class="a" style="left:1147px;top:700px;font-size:12px;line-height:16px;color:#333;">更多<span style="font-size:10px;letter-spacing:3px;margin-left:2px">&gt;&gt;</span></div>
<div class="a" style="left:962px;top:730px;width:228px;height:1px;background:repeating-linear-gradient(90deg,#aaa 0 1px,transparent 1px 2px)"></div>
<div class="a" style="left:961px;top:743px;width:15px;height:15px;background:#e0262d"></div>
<div class="a" style="left:961px;top:742px;font-size:12px;line-height:16px;color:#fff;width:15px;text-align:center;line-height:17px">1</div>
<div class="a" style="left:985px;top:741px;width:168px;overflow:hidden;font-size:12px;line-height:17px;color:#333">关注：限令过后武昌四天零成交</div>
<div class="a" style="left:961px;top:771px;width:15px;height:15px;background:#e0262d"></div>
<div class="a" style="left:961px;top:770px;font-size:12px;line-height:16px;color:#fff;width:15px;text-align:center;line-height:17px">2</div>
<div class="a" style="left:985px;top:769px;width:168px;overflow:hidden;font-size:12px;line-height:17px;color:#333">中华大道通车光谷人们有福了！</div>
<div class="a" style="left:961px;top:799px;width:15px;height:15px;background:#e0262d"></div>
<div class="a" style="left:961px;top:798px;font-size:12px;line-height:16px;color:#fff;width:15px;text-align:center;line-height:17px">3</div>
<div class="a" style="left:985px;top:797px;width:168px;overflow:hidden;font-size:12px;line-height:17px;color:#333">聚焦：隐市的优质盘原来在这里</div>
<div class="a" style="left:961px;top:827px;width:15px;height:15px;background:#aaa"></div>
<div class="a" style="left:961px;top:826px;font-size:12px;line-height:16px;color:#fff;width:15px;text-align:center;line-height:17px">4</div>
<div class="a" style="left:985px;top:825px;width:168px;overflow:hidden;font-size:12px;line-height:17px;color:#333">调查：新政出台后还打算买房吗</div>
<div class="a" style="left:961px;top:855px;width:15px;height:15px;background:#aaa"></div>
<div class="a" style="left:961px;top:854px;font-size:12px;line-height:16px;color:#fff;width:15px;text-align:center;line-height:17px">5</div>
<div class="a" style="left:985px;top:853px;width:168px;overflow:hidden;font-size:12px;line-height:17px;color:#333">全国楼市从<span style="display:inline-block;width:12px;text-align:right">“</span>银十<span style="display:inline-block;width:12px;text-align:left">”</span>开始降温了</div>
<div class="a" style="left:961px;top:883px;width:15px;height:15px;background:#aaa"></div>
<div class="a" style="left:961px;top:882px;font-size:12px;line-height:16px;color:#fff;width:15px;text-align:center;line-height:17px">6</div>
<div class="a" style="left:985px;top:881px;width:168px;overflow:hidden;font-size:12px;line-height:17px;color:#333">解析：武汉限购后房价是否会降</div>
<div class="a" style="left:950px;top:925px;width:250px;height:200px;border:1px solid #ddd"></div>
<div class="a" style="left:961px;top:937px;font-size:14px;line-height:18px;color:#333;">市场数据分析</div>
<div class="a" style="left:962px;top:966px;width:228px;height:1px;background:repeating-linear-gradient(90deg,#aaa 0 1px,transparent 1px 2px)"></div>
<div class="a" style="left:962px;top:985px;width:3px;height:3px;background:#555"></div>
<div class="a" style="left:975px;top:978px;font-size:12px;line-height:16px;color:#333;">7月全国28重点城市二手房均价17273...</div>
<div class="a" style="left:962px;top:1013px;width:3px;height:3px;background:#555"></div>
<div class="a" style="left:975px;top:1006px;font-size:12px;line-height:16px;color:#333;">7月二手房均价环涨316元 东湖高新区...</div>
<div class="a" style="left:962px;top:1041px;width:3px;height:3px;background:#555"></div>
<div class="a" style="left:975px;top:1034px;font-size:12px;line-height:16px;color:#333;">上半年武汉二手房最高1小时卖20套</div>
<div class="a" style="left:962px;top:1069px;width:3px;height:3px;background:#555"></div>
<div class="a" style="left:975px;top:1062px;font-size:12px;line-height:16px;color:#333;">2016年上半年武汉二手房楼市白皮书</div>
<div class="a" style="left:1155px;top:751px;width:45px;height:190px;background:#fff"></div>
<div class="a" style="left:1155px;top:751px;width:45px;height:45px;background:#f2f2f2"></div>
<div class="a" style="left:1155px;top:797px;width:45px;height:45px;background:#f2f2f2"></div>
<div class="a" style="left:1155px;top:843px;width:45px;height:45px;background:#f2f2f2"></div>
<svg style="left:1162px;top:759px" width="28" height="28" viewBox="0 0 28 28"><path d="M2.8 14.4 L15 3 L26.2 14.4 H22.5 V24.5 H7.3 V14.4 Z" fill="none" stroke="#0b0b3b" stroke-width="1.4" stroke-linejoin="miter"/><path d="M11 13.2 L15 17.3 L19 13.2 M15 17.3 V21.8 M11.2 17.1 H18.8 M11.2 19.5 H18.8" fill="none" stroke="#0b0b3b" stroke-width="1.4"/></svg>
<svg style="left:1165px;top:808px" width="24" height="24" viewBox="0 0 24 24"><path d="M4.75 19.6 V10.45 A7.1 7.1 0 0 1 18.95 10.45 V19.6" fill="none" stroke="#333" stroke-width="1.5"/><path d="M5.5 12.8 C2.7 13 2 15 2 16.2 C2 17.5 2.7 19.4 5.5 19.6 Z" fill="#333"/><path d="M18.2 12.8 C21 13 21.7 15 21.7 16.2 C21.7 17.5 21 19.4 18.2 19.6 Z" fill="#333"/><rect x="7.2" y="13" width="1.4" height="6.6" rx="0.7" fill="#333"/><rect x="15.2" y="13" width="1.4" height="6.6" rx="0.7" fill="#333"/></svg>
<svg style="left:1167px;top:856px" width="20" height="20" viewBox="0 0 20 20"><g fill="#222" fill-rule="evenodd"><path d="M0 0 H9 V8.8 H0Z M2 2 V6.8 H7 V2Z"/><rect x="3.3" y="3.2" width="2.4" height="2.4"/><path d="M11.2 0 H20 V8.8 H11.2Z M13.2 2 V6.8 H18 V2Z"/><rect x="14.5" y="3.2" width="2.4" height="2.4"/><path d="M0 11.2 H9 V20 H0Z M2 13.2 V18 H7 V13.2Z"/><rect x="3.3" y="14.4" width="2.4" height="2.4"/><path d="M11.2 11.2 H14.8 V12.9 H12.9 V14.6 H11.2Z"/><rect x="16" y="11.2" width="2.2" height="2.2"/><rect x="14.2" y="13.2" width="2.4" height="2.3"/><rect x="13" y="16.3" width="1.9" height="2"/><rect x="11.2" y="18.4" width="5.5" height="1.6"/><rect x="16" y="16.5" width="2.2" height="3.5"/></g></svg>
</body></html>
